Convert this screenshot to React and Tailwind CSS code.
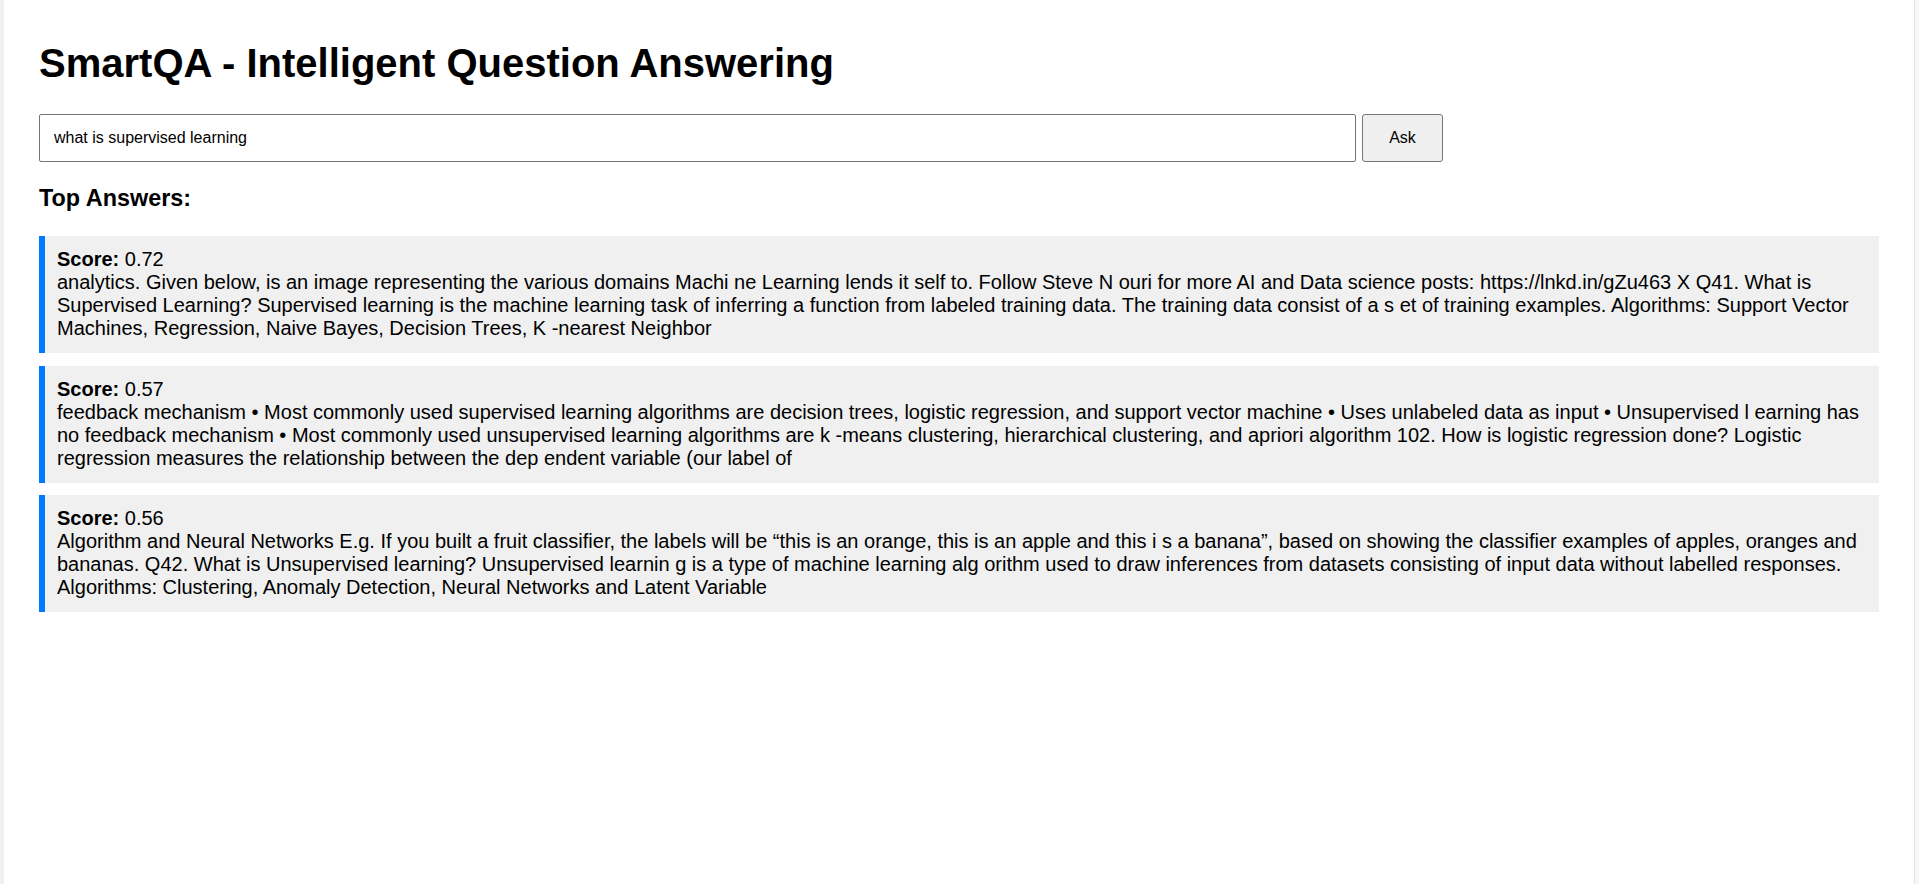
import React from "react";

const answers = [
  {
    score: "0.72",
    text: "analytics. Given below, is an image representing the various domains Machi ne Learning lends it self to. Follow Steve N ouri for more AI and Data science posts: https://lnkd.in/gZu463 X Q41. What is Supervised Learning? Supervised learning is the machine learning task of inferring a function from labeled training data. The training data consist of a s et of training examples. Algorithms: Support Vector Machines, Regression, Naive Bayes, Decision Trees, K -nearest Neighbor",
  },
  {
    score: "0.57",
    text: "feedback mechanism • Most commonly used supervised learning algorithms are decision trees, logistic regression, and support vector machine • Uses unlabeled data as input • Unsupervised l earning has no feedback mechanism • Most commonly used unsupervised learning algorithms are k -means clustering, hierarchical clustering, and apriori algorithm 102. How is logistic regression done? Logistic regression measures the relationship between the dep endent variable (our label of",
  },
  {
    score: "0.56",
    text: "Algorithm and Neural Networks E.g. If you built a fruit classifier, the labels will be “this is an orange, this is an apple and this i s a banana”, based on showing the classifier examples of apples, oranges and bananas. Q42. What is Unsupervised learning? Unsupervised learnin g is a type of machine learning alg orithm used to draw inferences from datasets consisting of input data without labelled responses. Algorithms: Clustering, Anomaly Detection, Neural Networks and Latent Variable",
  },
];

export default function App() {
  return (
    <main className="w-full h-screen flex bg-white text-black font-['Liberation_Sans',Arial,sans-serif]">
      <div className="w-[4px] bg-[#f0f0f0]" />
      <section className="flex-1 px-[35px] pt-[40px] flex flex-col">
        <h1 className="text-[40px] leading-[46px] font-bold">
          SmartQA - Intelligent Question Answering
        </h1>

        <div className="mt-[28px] flex items-center">
          <input
            type="text"
            defaultValue="what is supervised learning"
            className="w-[1317px] h-[48px] px-[14px] text-[16px] border border-[#767676] rounded-[2px] bg-white outline-none"
          />
          <button className="ml-[6px] w-[81px] h-[48px] text-[16px] bg-[#efefef] border border-[#767676] rounded-[3px]">
            Ask
          </button>
        </div>

        <h3 className="mt-[23px] text-[23.4px] leading-[27px] font-bold">
          Top Answers:
        </h3>

        <div className="mt-[24px] flex flex-col gap-[12.5px]">
          {answers.map((a) => (
            <div
              key={a.score}
              className="bg-[#f0f0f0] border-l-[6px] border-[#007bff] pl-[12px] pr-[12px] pt-[12px] pb-[13px] text-[20px] leading-[23px]"
            >
              <b>Score:</b> {a.score}
              <br />
              {a.text}
            </div>
          ))}
        </div>
      </section>
      <div className="w-[1px] bg-[#e6e6e6]" />
      <div className="w-[4px] bg-[#f6f6f6]" />
    </main>
  );
}
